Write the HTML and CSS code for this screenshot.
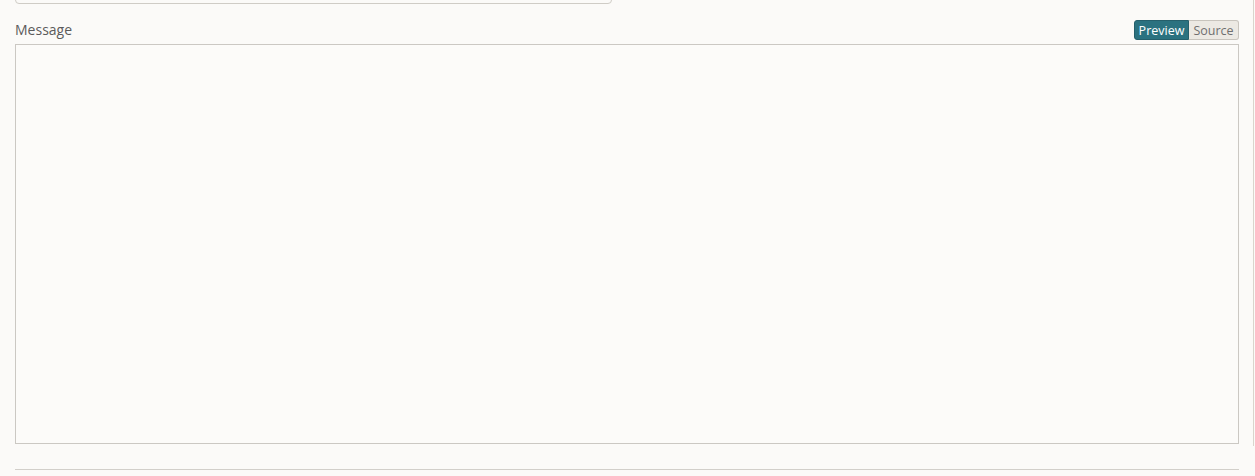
FILE: index.html
```html
<!DOCTYPE html>
<html>
<head>
<meta charset="utf-8">
<link rel="stylesheet" href="styles.css">
</head>
<body>
<div class="page">
  <div class="form">
    <div class="top-input"></div>
    <div class="field-head">
      <label class="field-label">Message</label>
      <div class="toggle">
        <button class="tbtn active">Preview</button>
        <button class="tbtn">Source</button>
      </div>
    </div>
    <div class="editor"></div>
    <div class="divider"></div>
  </div>
</div>
</body>
</html>
```

FILE: styles.css
```css
html, body {
  margin: 0;
  padding: 0;
  background: #fbfaf8;
}
body {
  font-family: "Open Sans", "Liberation Sans", sans-serif;
  width: 1255px;
  height: 476px;
  overflow: hidden;
}
.page {
  width: 1254px;
  height: 476px;
  border-right: 1px solid #d9d5cd;
  box-sizing: border-box;
}
.form {
  padding: 0 15px;
  width: 1224px;
}
.top-input {
  width: 597px;
  height: 34px;
  margin-top: -30px;
  box-sizing: border-box;
  border: 1px solid #cfccc6;
  border-radius: 4px;
  background: #fbfaf8;
}
.field-head {
  display: flex;
  justify-content: space-between;
  align-items: flex-end;
  margin-top: 16px;
  height: 20px;
}
.field-label {
  font-size: 14px;
  color: #5b5b5b;
  line-height: 20px;
}
.toggle {
  display: flex;
}
.tbtn {
  font-family: "Open Sans", "Liberation Sans", sans-serif;
  font-size: 12.5px;
  height: 20px;
  line-height: 18px;
  padding: 1px 0 0 0;
  margin: 0;
  border: 1px solid #c8c4bd;
  background: #ece9e3;
  color: #6f6f6f;
  cursor: pointer;
  text-align: center;
  box-sizing: border-box;
}
.tbtn:first-child {
  border-radius: 3px 0 0 3px;
}
.tbtn:last-child {
  border-radius: 0 3px 3px 0;
  border-left: none;
  width: 50px;
}
.tbtn.active {
  background: #2b7280;
  border-color: #255f6b;
  color: #ffffff;
  width: 55px;
}
.editor {
  margin-top: 4px;
  height: 400px;
  box-sizing: border-box;
  border: 1px solid #cbc8c3;
  background: #fcfbf9;
}
.divider {
  margin-top: 25px;
  height: 1px;
  background: #d2cfca;
}
```
